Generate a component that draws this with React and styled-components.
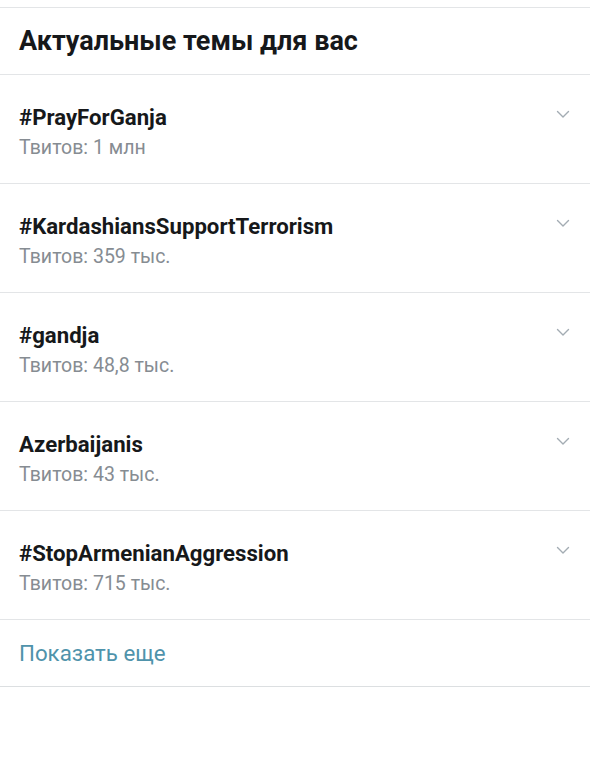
import React from "react";
import styled, { createGlobalStyle } from "styled-components";

const Global = createGlobalStyle`
  html, body { margin: 0; padding: 0; background: #fff; }
  body { font-family: Roboto, "Noto Sans", Arial, sans-serif; -webkit-font-smoothing: antialiased; }
`;

const Page = styled.div`
  width: 590px;
  min-height: 761px;
  background: #fff;
  padding-top: 7px;
  box-sizing: border-box;
`;

const Panel = styled.section`
  border-top: 1px solid #e3e5e7;
  border-bottom: 1px solid #dcdfe1;
`;

const Header = styled.h2`
  margin: 0;
  height: 66px;
  display: flex;
  align-items: center;
  padding: 0 19px;
  font-size: 27px;
  line-height: 30px;
  font-weight: 700;
  color: #16181a;
  border-bottom: 1px solid #e3e5e7;
`;

const Row = styled.div`
  height: 108px;
  display: flex;
  align-items: flex-start;
  justify-content: space-between;
  padding: 0 19px;
  border-bottom: 1px solid #e3e5e7;
  box-sizing: content-box;
`;

const Texts = styled.div`
  display: flex;
  flex-direction: column;
  padding-top: 29px;
`;

const Topic = styled.div`
  font-size: 22.2px;
  font-weight: 700;
  color: #16181a;
  line-height: 26px;
`;

const Count = styled.div`
  font-size: 19.5px;
  color: #868c92;
  line-height: 22px;
  margin-top: 7px;
`;

const Chevron = styled.svg`
  margin-top: 35px;
  margin-right: 1px;
  width: 14px;
  height: 9px;
`;

const More = styled.a`
  height: 66px;
  display: flex;
  align-items: center;
  padding: 0 19px;
  font-size: 22.3px;
  line-height: 26px;
  color: #4f93ab;
  text-decoration: none;
`;

const trends = [
  { topic: "#PrayForGanja", count: "Твитов: 1 млн" },
  { topic: "#KardashiansSupportTerrorism", count: "Твитов: 359 тыс." },
  { topic: "#gandja", count: "Твитов: 48,8 тыс." },
  { topic: "Azerbaijanis", count: "Твитов: 43 тыс." },
  { topic: "#StopArmenianAggression", count: "Твитов: 715 тыс." },
];

export default function App() {
  return (
    <Page>
      <Global />
      <Panel>
        <Header>Актуальные темы для вас</Header>
        {trends.map((t) => (
          <Row key={t.topic}>
            <Texts>
              <Topic>{t.topic}</Topic>
              <Count>{t.count}</Count>
            </Texts>
            <Chevron viewBox="0 0 14 9">
              <path d="M1.5 1.5 L7 7 L12.5 1.5" fill="none" stroke="#a3acb3" strokeWidth="1.4" strokeLinecap="round" strokeLinejoin="round" />
            </Chevron>
          </Row>
        ))}
        <More href="#">Показать еще</More>
      </Panel>
    </Page>
  );
}
